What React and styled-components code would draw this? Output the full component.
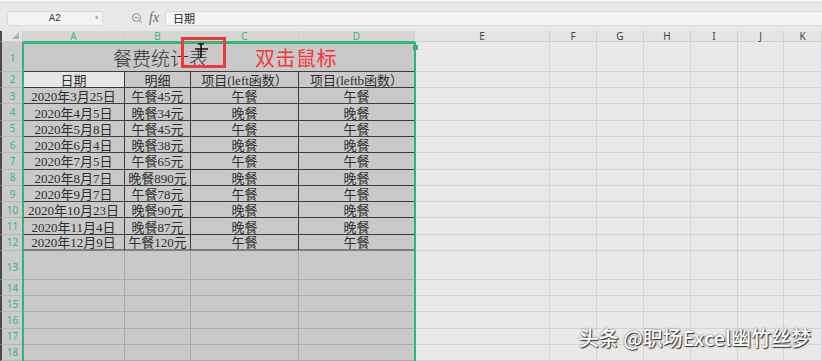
import React from "react";
import styled, { createGlobalStyle } from "styled-components";
import { ZoomOut } from "lucide-react";

const GlobalStyle = createGlobalStyle`
  html, body {
    margin: 0;
    padding: 0;
    background: #e8e8e8;
    font-family: "Noto Sans CJK SC", "Noto Sans", sans-serif;
  }
`;

const COLS = "23px 102px 66px 108px 116px 135px 47px 47px 47px 47px 46px 1fr";
const SEL_COLS = 4;

const Frame = styled.div`
  position: relative;
  width: 822px;
  height: 361px;
  overflow: hidden;
  background: #e8e8e8;
  display: flex;
  flex-direction: column;
`;

const TopStrip = styled.div`
  height: 3px;
  background: #f2f2f2;
  border-bottom: 1px solid #d8d8d8;
  box-sizing: border-box;
`;

const FormulaBar = styled.div`
  height: 15px;
  margin-top: 8px;
  display: flex;
  align-items: stretch;
  padding-left: 7px;
`;

const NameBox = styled.div`
  width: 96px;
  box-sizing: border-box;
  background: #f3f3f3;
  border: 1px solid #dadada;
  border-radius: 2px;
  display: flex;
  align-items: center;
  justify-content: center;
  position: relative;
  font-family: "Liberation Mono", monospace;
  font-size: 10px;
  color: #333;

  &::after {
    content: "▾";
    position: absolute;
    right: 3px;
    top: 1px;
    font-size: 8px;
    color: #999;
  }
`;

const FxGroup = styled.div`
  display: flex;
  align-items: center;
  gap: 6px;
  margin-left: 28px;
  width: 34px;
  color: #777;
`;

const Fx = styled.span`
  font-family: "Liberation Serif", serif;
  font-style: italic;
  font-size: 14px;
  color: #6a6a6a;
  line-height: 1;
`;

const FormulaInput = styled.div`
  flex: 1;
  box-sizing: border-box;
  background: #f5f5f5;
  border-top: 1px solid #d8d8d8;
  border-bottom: 1px solid #d8d8d8;
  border-left: 1px solid #d8d8d8;
  display: flex;
  align-items: center;
  padding-left: 7px;
  font-size: 11px;
  color: #222;
`;

const Gap = styled.div`
  height: 6px;
`;

const SheetBody = styled.div`
  position: relative;
  flex: 1;
`;

const Row = styled.div`
  display: grid;
  grid-template-columns: ${COLS};
  height: ${(p) => p.$h}px;
`;

const Corner = styled.div`
  background: #e4e4e4;
  border-right: 1px solid #cfcfcf;
  border-bottom: 1px solid #cfcfcf;
  position: relative;
  box-sizing: border-box;
  border-left: 2px solid #4a4a4a;

  &::after {
    content: "";
    position: absolute;
    right: 3px;
    bottom: 2px;
    border-left: 7px solid transparent;
    border-bottom: 7px solid #b4b4b4;
  }
`;

const ColHead = styled.div`
  box-sizing: border-box;
  background: ${(p) => (p.$sel ? "#d6d6d6" : "#e4e4e4")};
  color: ${(p) => (p.$sel ? "#3fb57a" : "#444")};
  border-right: 1px solid #cfcfcf;
  border-bottom: 1px solid ${(p) => (p.$sel ? "#3fb57a" : "#cfcfcf")};
  font-family: "Noto Sans", sans-serif;
  font-size: 10px;
  display: flex;
  align-items: center;
  justify-content: center;
  line-height: 1;
`;

const RowHead = styled.div`
  box-sizing: border-box;
  background: #cbcbcb;
  color: #3fb57a;
  border-left: 2px solid #4a4a4a;
  border-bottom: 1px solid #b8b8b8;
  font-family: "Noto Sans", sans-serif;
  font-size: 10px;
  display: flex;
  align-items: center;
  justify-content: center;
  padding-top: ${(p) => (p.$tall ? 4 : 0)}px;
`;

const Cell = styled.div`
  box-sizing: border-box;
  background: ${(p) => (p.$active ? "#e6e6e6" : p.$sel ? "#c9c9c9" : "#e9e9e9")};
  border-right: 1px solid
    ${(p) => (p.$table ? "#3c3c3c" : p.$sel ? "#aaaab2" : "#d3d3db")};
  border-bottom: ${(p) => (p.$last ? "2px solid #7c7c7c" : `1px solid ${p.$table ? "#3c3c3c" : p.$sel ? "#aaaab2" : "#d3d3db"}`)};
  display: flex;
  align-items: center;
  justify-content: center;
  font-family: "Liberation Serif", "Noto Sans CJK SC", serif;
  font-size: 13px;
  color: #2e2e2e;
  white-space: nowrap;
  overflow: hidden;
`;

const TitleCell = styled(Cell)`
  grid-column: 2 / span 4;
  border-bottom: 1px solid #3c3c3c;
  padding-right: 116px;
  padding-top: 2px;
  font-family: "Noto Sans CJK SC", sans-serif;
  font-weight: 300;
  font-size: 19px;
  color: #333;
`;

const Selection = styled.div`
  position: absolute;
  left: 22px;
  top: 0;
  width: 394px;
  bottom: -10px;
  box-sizing: border-box;
  border: 2px solid #2fb577;
  pointer-events: none;

  &::after {
    content: "";
    position: absolute;
    right: -4px;
    top: 1px;
    width: 5px;
    height: 5px;
    background: #2fb577;
  }
`;

const RedBox = styled.div`
  position: absolute;
  left: 181px;
  top: 37px;
  width: 45px;
  height: 31px;
  box-sizing: border-box;
  border: 3px solid #f2383a;
`;

const RedNote = styled.div`
  position: absolute;
  left: 255px;
  top: 46px;
  font-size: 20px;
  line-height: 24px;
  color: #f4363a;
  letter-spacing: 0.5px;
`;

const Cursor = styled.svg`
  position: absolute;
  left: 194px;
  top: 42px;
`;

const Watermark = styled.div`
  position: absolute;
  right: 11px;
  top: 325px;
  font-size: 20px;
  line-height: 26px;
  color: #fff;
  font-weight: 500;
  text-shadow: 1px 1px 1px #2a2a2a, 0 0 2px #555;
  white-space: nowrap;
`;

const LETTERS = ["A", "B", "C", "D", "E", "F", "G", "H", "I", "J", "K"];

const HEADERS = ["日期", "明细", "项目(left函数）", "项目(leftb函数）"];

const DATA = [
  ["2020年3月25日", "午餐45元", "午餐", "午餐"],
  ["2020年4月5日", "晚餐34元", "晚餐", "晚餐"],
  ["2020年5月8日", "午餐45元", "午餐", "午餐"],
  ["2020年6月4日", "晚餐38元", "晚餐", "晚餐"],
  ["2020年7月5日", "午餐65元", "午餐", "午餐"],
  ["2020年8月7日", "晚餐890元", "晚餐", "晚餐"],
  ["2020年9月7日", "午餐78元", "午餐", "午餐"],
  ["2020年10月23日", "晚餐90元", "晚餐", "晚餐"],
  ["2020年11月4日", "晚餐87元", "晚餐", "晚餐"],
  ["2020年12月9日", "午餐120元", "午餐", "午餐"],
];

const EmptyCells = ({ from = 0, table, last }) =>
  LETTERS.slice(from).map((l, i) => {
    const idx = from + i;
    const sel = idx < SEL_COLS;
    return <Cell key={l} $sel={sel} $table={sel && table} $last={sel && last} />;
  });

const App = () => {
  const tableRows = [HEADERS, ...DATA];
  return (
    <Frame>
      <GlobalStyle />
      <TopStrip />
      <FormulaBar>
        <NameBox>A2</NameBox>
        <FxGroup>
          <ZoomOut size={12} strokeWidth={1.6} />
          <Fx>fx</Fx>
        </FxGroup>
        <FormulaInput>日期</FormulaInput>
      </FormulaBar>
      <Gap />
      <Row $h={13}>
        <Corner />
        {LETTERS.map((l, i) => (
          <ColHead key={l} $sel={i < SEL_COLS}>
            {l}
          </ColHead>
        ))}
      </Row>
      <SheetBody>
        <Row $h={30}>
          <RowHead $tall>1</RowHead>
          <TitleCell $sel>餐费统计表</TitleCell>
          <EmptyCells from={4} />
        </Row>
        {tableRows.map((r, ri) => (
          <Row $h={16.3} key={ri}>
            <RowHead>{ri + 2}</RowHead>
            {r.map((v, ci) => (
              <Cell
                key={ci}
                $sel
                $table
                $active={ri === 0 && ci === 0}
                $last={ri === tableRows.length - 1}
              >
                {v}
              </Cell>
            ))}
            <EmptyCells from={4} />
          </Row>
        ))}
        <Row $h={29}>
          <RowHead $tall>13</RowHead>
          <EmptyCells />
        </Row>
        {[14, 15, 16, 17, 18].map((n) => (
          <Row $h={16.2} key={n}>
            <RowHead>{n}</RowHead>
            <EmptyCells />
          </Row>
        ))}
        <Selection />
      </SheetBody>

      <RedBox />
      <Cursor width="16" height="18" viewBox="0 0 16 18">
        <path d="M7 1v15M1 7h13M4 2h6" stroke="#111" strokeWidth="1.6" fill="none" />
      </Cursor>
      <RedNote>双击鼠标</RedNote>
      <Watermark>头条 @职场Excel幽竹丝梦</Watermark>
    </Frame>
  );
};

export default App;
